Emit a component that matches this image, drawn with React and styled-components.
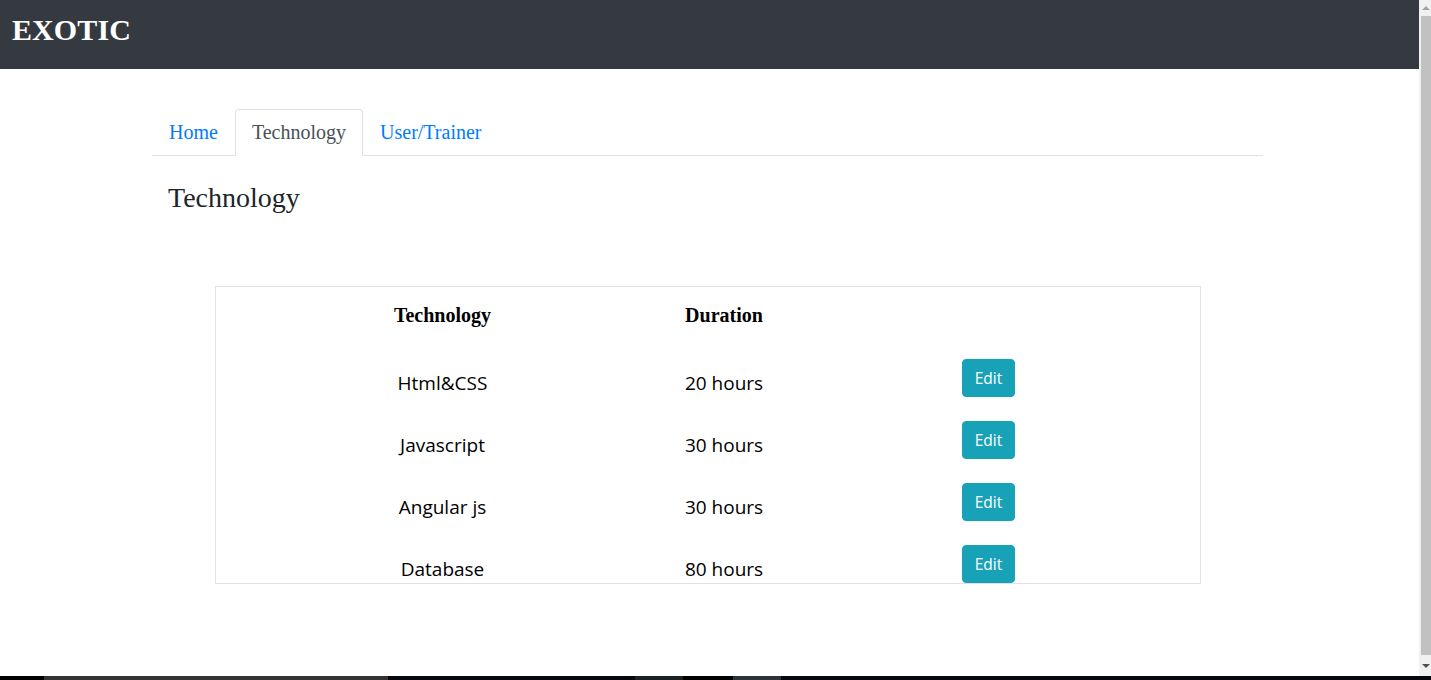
import React from 'react'
import styled, { createGlobalStyle } from 'styled-components'

const GlobalStyle = createGlobalStyle`
    html, body {
        margin: 0;
        padding: 0;
        overflow: hidden;
        background: #fff;
    }
    * {
        box-sizing: border-box;
    }
`;

const Screen = styled.div`
    display: flex;
    flex-direction: column;
    width: 1431px;
    height: 680px;
`;

const Window = styled.div`
    display: flex;
    flex: 1;
    min-height: 0;
`;

const Page = styled.div`
    flex: 1;
    min-width: 0;
    overflow: hidden;
    font-family: "Liberation Serif", "Times New Roman", serif;
    color: #212529;
`;

const Navbar = styled.header`
    display: flex;
    align-items: center;
    height: 69px;
    padding: 0 0 10px 12px;
    background: #343a40;
`;

const Brand = styled.h1`
    margin: 0;
    font-size: 30px;
    font-weight: 700;
    color: #fff;
    letter-spacing: 0.1px;
`;

const Container = styled.main`
    width: 1111px;
    margin: 40px 0 0 152px;
`;

const Tabs = styled.ul`
    display: flex;
    margin: 0;
    padding: 0;
    list-style: none;
    border-bottom: 1px solid #dee2e6;
`;

const Tab = styled.li`
    margin-bottom: -1px;
    padding: 8px 16px;
    font-size: 20px;
    line-height: 29px;
    color: ${({ active }) => active ? '#495057' : '#007bff'};
    background: ${({ active }) => active ? '#fff' : 'transparent'};
    border: 1px solid ${({ active }) => active ? '#dee2e6' : 'transparent'};
    border-bottom-color: ${({ active }) => active ? '#fff' : 'transparent'};
    border-radius: 4px 4px 0 0;
    cursor: pointer;
`;

const Title = styled.h2`
    margin: 25px 0 0;
    padding-left: 16px;
    font-size: 28px;
    font-weight: 400;
    line-height: 33px;
`;

const TableBox = styled.section`
    width: 986px;
    height: 298px;
    margin: 72px auto 0;
    border: 1px solid #dee2e6;
    overflow: hidden;
`;

const Row = styled.div`
    display: grid;
    grid-template-columns: 290px 273px 256px;
    height: ${({ head }) => head ? '65px' : '62px'};
    padding-left: 82px;
    padding-top: ${({ head }) => head ? '16px' : '7px'};
`;

const HeadCell = styled.div`
    text-align: center;
    font-size: 20px;
    font-weight: 700;
    line-height: 24px;
    color: #000;
`;

const Cell = styled.div`
    padding-top: 12px;
    text-align: center;
    font-family: "Open Sans", "Noto Sans", sans-serif;
    font-size: 19px;
    line-height: 24px;
    color: #000;
`;

const ButtonCell = styled.div`
    display: flex;
    justify-content: center;
`;

const EditButton = styled.button`
    width: 53px;
    height: 38px;
    padding: 0;
    border: 1px solid #17a2b8;
    border-radius: 4px;
    background: #17a2b8;
    color: #fff;
    font-family: "Open Sans", "Noto Sans", sans-serif;
    font-size: 15.5px;
    cursor: pointer;
`;

const Scrollbar = styled.div`
    display: flex;
    flex-direction: column;
    width: 12px;
    background: #f1f1f1;
`;

const ArrowBox = styled.div`
    display: flex;
    align-items: center;
    justify-content: center;
    height: ${({ down }) => down ? '21px' : '16px'};
    padding-left: 2px;
`;

const Arrow = styled.span`
    width: 0;
    height: 0;
    border-left: 4px solid transparent;
    border-right: 4px solid transparent;
    ${({ down }) => down
        ? 'border-top: 4px solid #505050;'
        : 'border-bottom: 4px solid #a3a3a3;'}
`;

const Thumb = styled.div`
    flex: 1;
    margin-left: 2px;
    background: #c1c1c1;
`;

const Taskbar = styled.div`
    display: flex;
    height: 4px;
    background: #05080c;
`;

const TaskSegment = styled.div`
    width: ${({ w }) => w}px;
    background: ${({ color }) => color};
`;

const courses = [
    { name: 'Html&CSS', duration: '20 hours' },
    { name: 'Javascript', duration: '30 hours' },
    { name: 'Angular js', duration: '30 hours' },
    { name: 'Database', duration: '80 hours' },
];

const segments = [
    { w: 44, color: '#000' },
    { w: 344, color: '#333333' },
    { w: 247, color: '#05080c' },
    { w: 48, color: '#1c2124' },
    { w: 50, color: '#000' },
    { w: 48, color: '#2d3338' },
];

export default function App() {
    return (
        <Screen>
            <GlobalStyle />
            <Window>
                <Page>
                    <Navbar>
                        <Brand>EXOTIC</Brand>
                    </Navbar>
                    <Container>
                        <Tabs>
                            <Tab>Home</Tab>
                            <Tab active>Technology</Tab>
                            <Tab>User/Trainer</Tab>
                        </Tabs>
                        <Title>Technology</Title>
                        <TableBox>
                            <Row head>
                                <HeadCell>Technology</HeadCell>
                                <HeadCell>Duration</HeadCell>
                                <HeadCell />
                            </Row>
                            {courses.map((c) => (
                                <Row key={c.name}>
                                    <Cell>{c.name}</Cell>
                                    <Cell>{c.duration}</Cell>
                                    <ButtonCell>
                                        <EditButton>Edit</EditButton>
                                    </ButtonCell>
                                </Row>
                            ))}
                        </TableBox>
                    </Container>
                </Page>
                <Scrollbar>
                    <ArrowBox><Arrow /></ArrowBox>
                    <Thumb />
                    <ArrowBox down><Arrow down /></ArrowBox>
                </Scrollbar>
            </Window>
            <Taskbar>
                {segments.map((s, i) => (
                    <TaskSegment key={i} w={s.w} color={s.color} />
                ))}
            </Taskbar>
        </Screen>
    )
}
